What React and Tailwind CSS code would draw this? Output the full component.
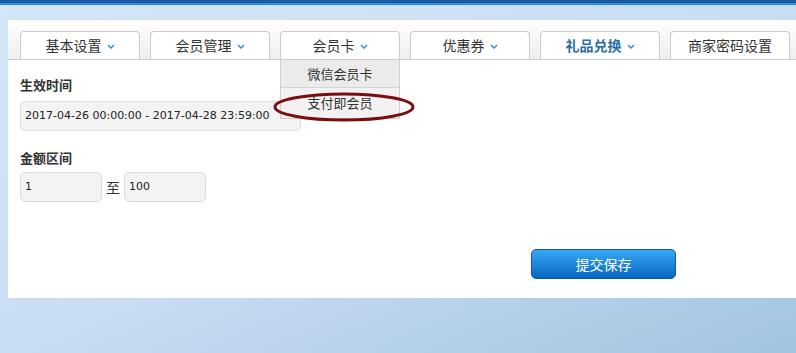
import React from 'react';

const cjk = { fontFamily: '"Noto Sans CJK SC", "Noto Sans", sans-serif' };

// small blue chevron next to tab labels
const Chevron = () => (
  <svg width="8" height="5" viewBox="0 0 8 5" className="ml-[5px] mt-[2px]">
    <path d="M1 1 L4 4 L7 1" fill="none" stroke="#3a8fd2" strokeWidth="1.5" />
  </svg>
);

const tabs = [
  { label: '基本设置', arrow: true },
  { label: '会员管理', arrow: true },
  { label: '会员卡', arrow: true, open: true },
  { label: '优惠券', arrow: true },
  { label: '礼品兑换', arrow: true, active: true },
  { label: '商家密码设置', arrow: false },
];

const Tab = ({ tab }) => (
  <div className="relative">
    <div
      className={
        'w-[120px] h-[28px] flex items-center justify-center bg-white border border-b-0 border-[#cccccc] rounded-t-[4px] text-[14px] ' +
        (tab.active ? 'font-bold text-[#2b6ea8]' : 'text-[#333333]')
      }
      style={cjk}
    >
      {tab.label}
      {tab.arrow && <Chevron />}
    </div>
    {tab.open && (
      <div className="absolute left-0 top-[29px] w-[120px] z-10 border-x border-b border-[#cfcfcf] text-[13px] text-[#333333]" style={cjk}>
        <div className="h-[28px] flex items-center justify-center bg-[#ebebeb] border-b border-[#d4d4d4]">微信会员卡</div>
        <div className="h-[30px] flex items-center justify-center bg-[#f2f2f2]">支付即会员</div>
        {/* highlight ring */}
        <svg width="142" height="30" className="absolute left-[-8px] top-[32px]">
          <ellipse cx="71" cy="15" rx="69" ry="13" fill="none" stroke="#7a0d0d" strokeWidth="3" />
        </svg>
      </div>
    )}
  </div>
);

const Field = ({ value, w }) => (
  <div
    className={'h-[30px] flex items-center pl-[4px] bg-[#f3f3f3] border border-[#dcdcdc] rounded-[5px] text-[11px] text-[#222222] ' + w}
    style={{ fontFamily: '"DejaVu Sans", sans-serif' }}
  >
    {value}
  </div>
);

export default function App() {
  return (
    <div className="w-[796px] h-[353px] overflow-hidden bg-gradient-to-br from-[#d4e6f8] via-[#c9ddf3] to-[#a2c4e0]">
      <div className="h-[3px] bg-[#1b5aa2]" />
      <div className="h-[2px] bg-[#2c8de4]" />

      <div className="ml-2 mt-[15px] h-[278px] bg-white">
        {/* tab strip */}
        <div className="h-[40px] pt-[11px] pl-3 flex gap-[10px] border-b border-[#cccccc] bg-gradient-to-b from-white to-[#eeeeee]">
          {tabs.map((t) => (
            <Tab key={t.label} tab={t} />
          ))}
        </div>

        {/* form */}
        <div className="px-3 pt-[17px]">
          <div className="text-[13px] leading-[16px] font-bold text-[#333333]" style={cjk}>生效时间</div>
          <div className="mt-[8px]">
            <Field value="2017-04-26 00:00:00 - 2017-04-28 23:59:00" w="w-[281px]" />
          </div>

          <div className="mt-[19px] text-[13px] leading-[16px] font-bold text-[#333333]" style={cjk}>金额区间</div>
          <div className="mt-[6px] flex items-center">
            <Field value="1" w="w-[82px]" />
            <span className="mx-[4px] text-[14px] text-[#333333]" style={cjk}>至</span>
            <Field value="100" w="w-[82px]" />
          </div>

          <div className="mt-[47px] ml-[511px]">
            <button
              className="w-[145px] h-[30px] rounded-[5px] border border-[#0d5c9f] bg-gradient-to-b from-[#37a8f5] to-[#0767c0] text-white text-[14px]"
              style={cjk}
            >
              提交保存
            </button>
          </div>
        </div>
      </div>
    </div>
  );
}
